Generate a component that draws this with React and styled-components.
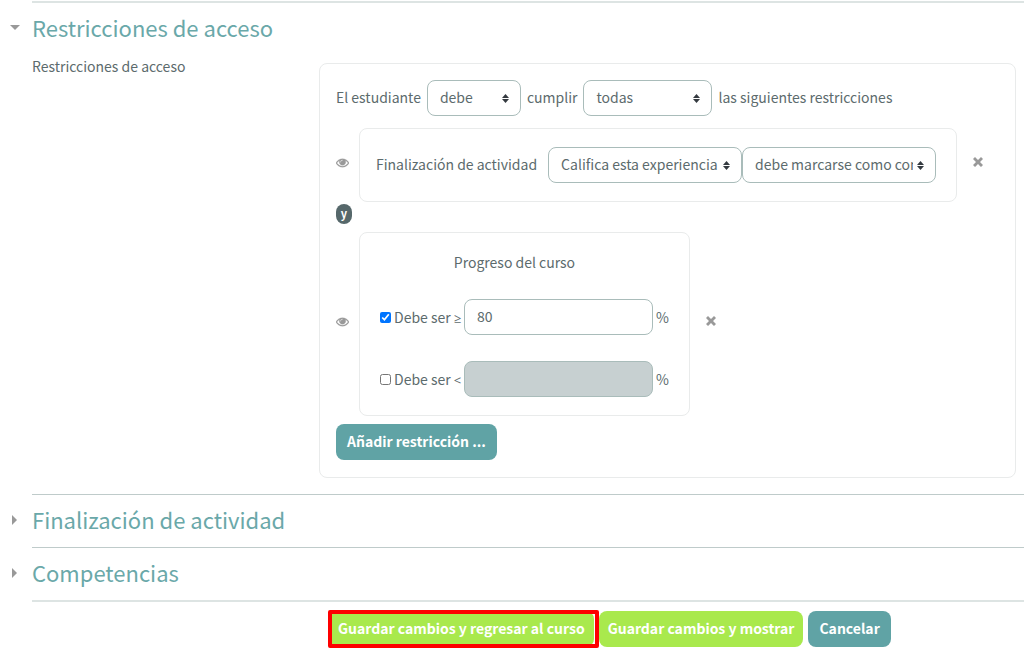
import { useState } from "react";
import styled, { createGlobalStyle } from "styled-components";

function Dropdown({ label, options, width }) {
  return (
    <SelectBox $width={width}>
      <Select aria-label={label}>
        {options.map((option) => (
          <option key={option}>{option}</option>
        ))}
      </Select>
      <SelectArrows viewBox="0 0 7 9" aria-hidden="true">
        <path d="M3.500 0L0 4h7zm0 9L0 5h7z" />
      </SelectArrows>
    </SelectBox>
  );
}

function EyeButton() {
  return (
    <IconButton type="button" aria-label="Mostrar u ocultar">
      <svg width="13" height="13" viewBox="0 0 1792 1792" aria-hidden="true">
        <path
          stroke="#999"
          strokeWidth="40"
          d="M1664 960q-152-236-381-353 61 104 61 225 0 185-131.500 316.500t-316.500 131.500-316.500-131.500-131.500-316.500q0-121 61-225-229 117-381 353 133 205 333.500 326.500t434.500 121.500 434.500-121.500 333.500-326.500zm-720-384q0-20-14-34t-34-14q-125 0-214.500 89.500t-89.500 214.500q0 20 14 34t34 14 34-14 14-34q0-86 61-147t147-61q20 0 34-14t14-34zm848 384q0 34-20 69-140 230-376.500 368.500t-499.500 138.500-499.500-139-376.500-368q-20-35-20-69t20-69q140-229 376.500-368t499.500-139 499.500 139 376.500 368q20 35 20 69z"
        />
      </svg>
    </IconButton>
  );
}

function DeleteButton() {
  return (
    <IconButton type="button" aria-label="Borrar">
      <svg width="10" height="10" viewBox="0 0 10 10" aria-hidden="true">
        <path d="M2 0L5 3L8 0L10 2L7 5L10 8L8 10L5 7L2 10L0 8L3 5L0 2Z" />
      </svg>
    </IconButton>
  );
}

function ProgressLimit({ id, sign, initialChecked, initialValue }) {
  const [checked, setChecked] = useState(initialChecked);

  return (
    <LimitRow>
      <CheckLabel>
        <Checkbox
          type="checkbox"
          checked={checked}
          onChange={(e) => setChecked(e.target.checked)}
        />
        <span>
          Debe ser <Sign>{sign}</Sign>
        </span>
      </CheckLabel>
      <ValueInput
        id={id}
        type="text"
        defaultValue={initialValue}
        disabled={!checked}
      />
      <label htmlFor={id}>%</label>
    </LimitRow>
  );
}

function SectionTitle({ open, children }) {
  return (
    <Title>
      <TitleLink href="#" aria-expanded={Boolean(open)}>
        <Caret width="10" height="10" viewBox="0 0 10 10" aria-hidden="true">
          <path d={open ? "M0 2H10L5 7Z" : "M2 0L7 5L2 10Z"} />
        </Caret>
        {children}
      </TitleLink>
    </Title>
  );
}

function AccessRestrictions() {
  return (
    <SettingRow>
      <div>Restricciones de acceso</div>
      <Panel>
        <Sentence>
          <Text>El estudiante</Text>
          <Dropdown label="Tipo" options={["debe", "no debe"]} width={94} />
          <Text>cumplir</Text>
          <Dropdown
            label="Condiciones"
            options={["todas", "cualquiera"]}
            width={129}
          />
          <Text>las siguientes restricciones</Text>
        </Sentence>

        <Restriction>
          <EyeButton />
          <ActivityCard>
            <Text>Finalización de actividad</Text>
            <SelectPair>
              <Dropdown
                label="Actividad"
                options={["Califica esta experiencia"]}
                width={194}
              />
              <Dropdown
                label="Estado"
                options={[
                  "debe marcarse como completada",
                  "no debe marcarse como completada",
                ]}
                width={194}
              />
            </SelectPair>
          </ActivityCard>
          <DeleteButton />
        </Restriction>

        <Connector>y</Connector>

        <Restriction>
          <EyeButton />
          <ProgressCard>
            <ProgressTitle>Progreso del curso</ProgressTitle>
            <ProgressLimit
              id="progress-min"
              sign="≥"
              initialChecked
              initialValue="80"
            />
            <ProgressLimit
              id="progress-max"
              sign="<"
              initialChecked={false}
              initialValue=""
            />
          </ProgressCard>
          <DeleteButton />
        </Restriction>

        <AddButton type="button">Añadir restricción ...</AddButton>
      </Panel>
    </SettingRow>
  );
}

export default function App() {
  return (
    <>
      <GlobalStyle />
      <Form onSubmit={(e) => e.preventDefault()}>
        <Section>
          <SectionTitle open>Restricciones de acceso</SectionTitle>
          <AccessRestrictions />
        </Section>
        <Section $line="#bfcbca">
          <SectionTitle>Finalización de actividad</SectionTitle>
        </Section>
        <Section $line="#bfcbca">
          <SectionTitle>Competencias</SectionTitle>
        </Section>
        <Actions>
          <Highlight>
            <Button type="submit" $primary>
              Guardar cambios y regresar al curso
            </Button>
          </Highlight>
          <Button type="submit" $primary>
            Guardar cambios y mostrar
          </Button>
          <Button type="button">Cancelar</Button>
        </Actions>
      </Form>
    </>
  );
}

const GlobalStyle = createGlobalStyle`
  * {
    box-sizing: border-box;
  }

  body {
    margin: 0;
    background: #fff;
    color: #5c6b6d;
    font-family: "Noto Sans CJK SC", "Noto Sans", sans-serif;
    font-size: 14px;
    line-height: 22px;
  }

  button,
  input,
  select {
    font: inherit;
    color: inherit;
  }
`;

const Form = styled.form`
  padding: 1px 0 8px 32px;
`;

const Section = styled.section`
  border-top: ${({ $line }) => ($line ? `1px solid ${$line}` : "2px solid #dde4e3")};
`;

const Title = styled.h3`
  margin: 0;
  padding: 8px 0 12px;
  font-size: 22px;
  font-weight: 400;
  line-height: 32px;
`;

const TitleLink = styled.a`
  display: flex;
  align-items: center;
  gap: 12px;
  margin-left: -22px;
  color: #6aa8a9;
  text-decoration: none;
`;

const Caret = styled.svg`
  margin-top: 2px;
  fill: #999;
`;

const SettingRow = styled.div`
  display: grid;
  grid-template-columns: 7fr 17fr;
  align-items: start;
  padding: 0 8px 16px 0;
`;

const Panel = styled.div`
  margin-top: 8px;
  padding: 16px 16px 17px;
  border: 1px solid #e9ebeb;
  border-radius: 8px;
`;

const Text = styled.span`
  padding-bottom: 2px;
`;

const Sentence = styled.div`
  display: flex;
  align-items: center;
  gap: 6px;
  margin-bottom: 12px;
`;

const SelectBox = styled.div`
  display: grid;
  align-items: center;
  width: ${({ $width }) => $width}px;
`;

const Select = styled.select`
  grid-area: 1 / 1;
  width: 100%;
  height: 36px;
  padding: 0 22px 2px 12px;
  appearance: none;
  border: 1px solid #a9bcba;
  border-radius: 8px;
  background: #fff;
`;

const SelectArrows = styled.svg`
  grid-area: 1 / 1;
  justify-self: end;
  width: 7px;
  height: 9px;
  margin-right: 12px;
  fill: #343a40;
  pointer-events: none;
`;

const Restriction = styled.div`
  display: flex;
  align-items: center;
`;

const IconButton = styled.button`
  display: flex;
  padding: 0 0 6px;
  border: 0;
  background: none;
  fill: #999;
  cursor: pointer;
`;

const Card = styled.div`
  margin: 0 16px 0 10px;
  border: 1px solid #e9ebeb;
  border-radius: 8px;
`;

const ActivityCard = styled(Card)`
  display: flex;
  align-items: center;
  gap: 11px;
  padding: 18px 20px 18px 16px;
`;

const SelectPair = styled.div`
  display: flex;
`;

const Connector = styled.div`
  width: 16px;
  margin: 2px 0 8px;
  padding-bottom: 1px;
  border-radius: 8px;
  background: #56686b;
  color: #fff;
  font-size: 11px;
  font-weight: 700;
  line-height: 19px;
  text-align: center;
`;

const ProgressCard = styled(Card)`
  padding: 18px 20px;
`;

const ProgressTitle = styled.div`
  margin-right: 20px;
  text-align: center;
`;

const LimitRow = styled.div`
  display: flex;
  align-items: center;
  gap: 3px;
  padding-top: 26px;

  label {
    padding-bottom: 1px;
  }
`;

const CheckLabel = styled.label`
  display: flex;
  align-items: center;
  gap: 3px;
  width: 81px;
  white-space: nowrap;
`;

const Sign = styled.span`
  font-family: "Open Sans", sans-serif;
  font-size: 13px;
  line-height: 1;
`;

const Checkbox = styled.input`
  width: 11px;
  height: 11px;
  margin: 2px 0 0;
`;

const ValueInput = styled.input`
  width: 189px;
  height: 36px;
  padding: 0 12px 2px;
  border: 1px solid #a9bcba;
  border-radius: 8px;
  background: #fff;

  &:disabled {
    background: #c7d0d1;
  }
`;

const Button = styled.button`
  height: 36px;
  padding: ${({ $primary }) => ($primary ? "0 9px 2px" : "0 11px 2px")};
  border: 0;
  border-radius: 8px;
  background: ${({ $primary }) => ($primary ? "#a9e94d" : "#60a3a5")};
  color: #fff;
  font-weight: 700;
  cursor: pointer;
`;

const AddButton = styled(Button)`
  margin-top: 8px;
`;

const Actions = styled.div`
  display: flex;
  gap: 5px;
  padding: 9px 0 0 297px;
  border-top: 2px solid #dde4e3;
`;

const Highlight = styled.div`
  position: relative;

  &::after {
    content: "";
    position: absolute;
    inset: -1px -5px -1px -1px;
    border: 4px solid #fe0000;
    border-radius: 2px;
    pointer-events: none;
  }
`;
